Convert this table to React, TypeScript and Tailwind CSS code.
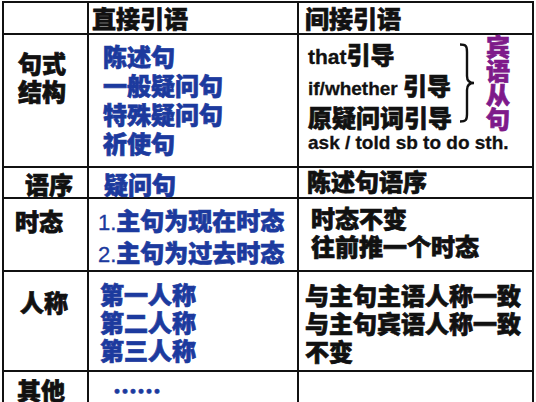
import React from "react";

const cjk = "font-['Noto_Sans_CJK_SC','Noto_Sans',sans-serif] font-black [-webkit-text-stroke:0.7px_currentColor]";
const latin = "font-['Liberation_Sans','Noto_Sans_CJK_SC',sans-serif] font-bold [-webkit-text-stroke:0.3px_currentColor]";
const blue = "text-[#1c3a9e]";
const ink = "text-[#111]";

function Cell({ className = "", children }: { className?: string; children?: React.ReactNode }) {
  return <div className={`bg-white ${className}`}>{children}</div>;
}

function Brace() {
  return (
    <svg width="18" height="80" viewBox="0 0 18 80" className="shrink-0">
      <path
        d="M2 1.5 C8 1.5 9 3 9 9 L9 33 C9 38 11 40 16 40 C11 40 9 42 9 47 L9 71 C9 77 8 78.5 2 78.5"
        fill="none"
        stroke="#111"
        strokeWidth="2.4"
      />
    </svg>
  );
}

export default function App() {
  return (
    <div className="w-[536px] h-[402px] overflow-hidden bg-white">
      <div
        className={`ml-[2px] mt-[1px] w-[532px] grid grid-cols-[83px_208px_233px] grid-rows-[30px_131px_29px_71px_98px_40px] gap-[2px] p-[2px] bg-[#111] text-[24px] ${cjk}`}
      >
        {/* header */}
        <Cell />
        <Cell className={`pl-[3px] leading-[30px] ${ink}`}>直接引语</Cell>
        <Cell className={`pl-[6px] leading-[30px] ${ink}`}>间接引语</Cell>

        {/* 句式结构 */}
        <Cell className={`pl-[14px] pt-[14px] leading-[28px] ${ink}`}>
          <div>句式</div>
          <div>结构</div>
        </Cell>
        <Cell className={`pl-[14px] pt-[6px] leading-[29px] ${blue}`}>
          <div>陈述句</div>
          <div>一般疑问句</div>
          <div>特殊疑问句</div>
          <div>祈使句</div>
        </Cell>
        <Cell className={`pl-[9px] pt-[5px] leading-[28px] ${ink}`}>
          <div className="flex items-start">
            <div className="w-[150px] shrink-0">
              <div>
                <span className={`${latin} text-[21px]`}>that</span>引导
              </div>
              <div>
                <span className={`${latin} text-[19px]`}>if/whether </span>引导
              </div>
              <div>原疑问词引导</div>
            </div>
            <div className="mt-[3px]">
              <Brace />
            </div>
            <div className="ml-[10px] -mt-[6px] flex flex-col leading-[24px] text-[#7e1a8a]">
              <span>宾</span>
              <span>语</span>
              <span>从</span>
              <span>句</span>
            </div>
          </div>
          <div className={`${latin} text-[19px] -mt-[2px]`}>ask / told sb to do sth.</div>
        </Cell>

        {/* 语序 */}
        <Cell className={`pl-[21px] pt-[1px] leading-[29px] ${ink}`}>语序</Cell>
        <Cell className={`pl-[15px] pt-[1px] leading-[29px] ${blue}`}>疑问句</Cell>
        <Cell className={`pl-[8px] leading-[25px] ${ink}`}>陈述句语序</Cell>

        {/* 时态 */}
        <Cell className={`pl-[11px] pt-[7px] leading-[30px] ${ink}`}>时态</Cell>
        <Cell className={`pl-[9px] pt-[6px] leading-[29px] ${blue}`}>
          <div>
            <span className={`${latin} text-[22px] font-normal`}>1.</span>主句为现在时态
          </div>
          <div>
            <span className={`${latin} text-[22px] font-normal`}>2.</span>主句为过去时态
          </div>
        </Cell>
        <Cell className={`pl-[12px] pt-[5px] leading-[28px] ${ink}`}>
          <div>时态不变</div>
          <div>往前推一个时态</div>
        </Cell>

        {/* 人称 */}
        <Cell className={`pl-[16px] pt-[15px] leading-[30px] ${ink}`}>人称</Cell>
        <Cell className={`pl-[11px] pt-[8px] leading-[28px] ${blue}`}>
          <div>第一人称</div>
          <div>第二人称</div>
          <div>第三人称</div>
        </Cell>
        <Cell className={`pl-[6px] pt-[9px] leading-[28px] ${ink}`}>
          <div>与主句主语人称一致</div>
          <div>与主句宾语人称一致</div>
          <div>不变</div>
        </Cell>

        {/* 其他 */}
        <Cell className={`pl-[13px] pt-[3px] leading-[30px] ${ink}`}>其他</Cell>
        <Cell className={`pl-[24px] pt-[3px] leading-[30px] ${blue}`}>……</Cell>
        <Cell />
      </div>
    </div>
  );
}
